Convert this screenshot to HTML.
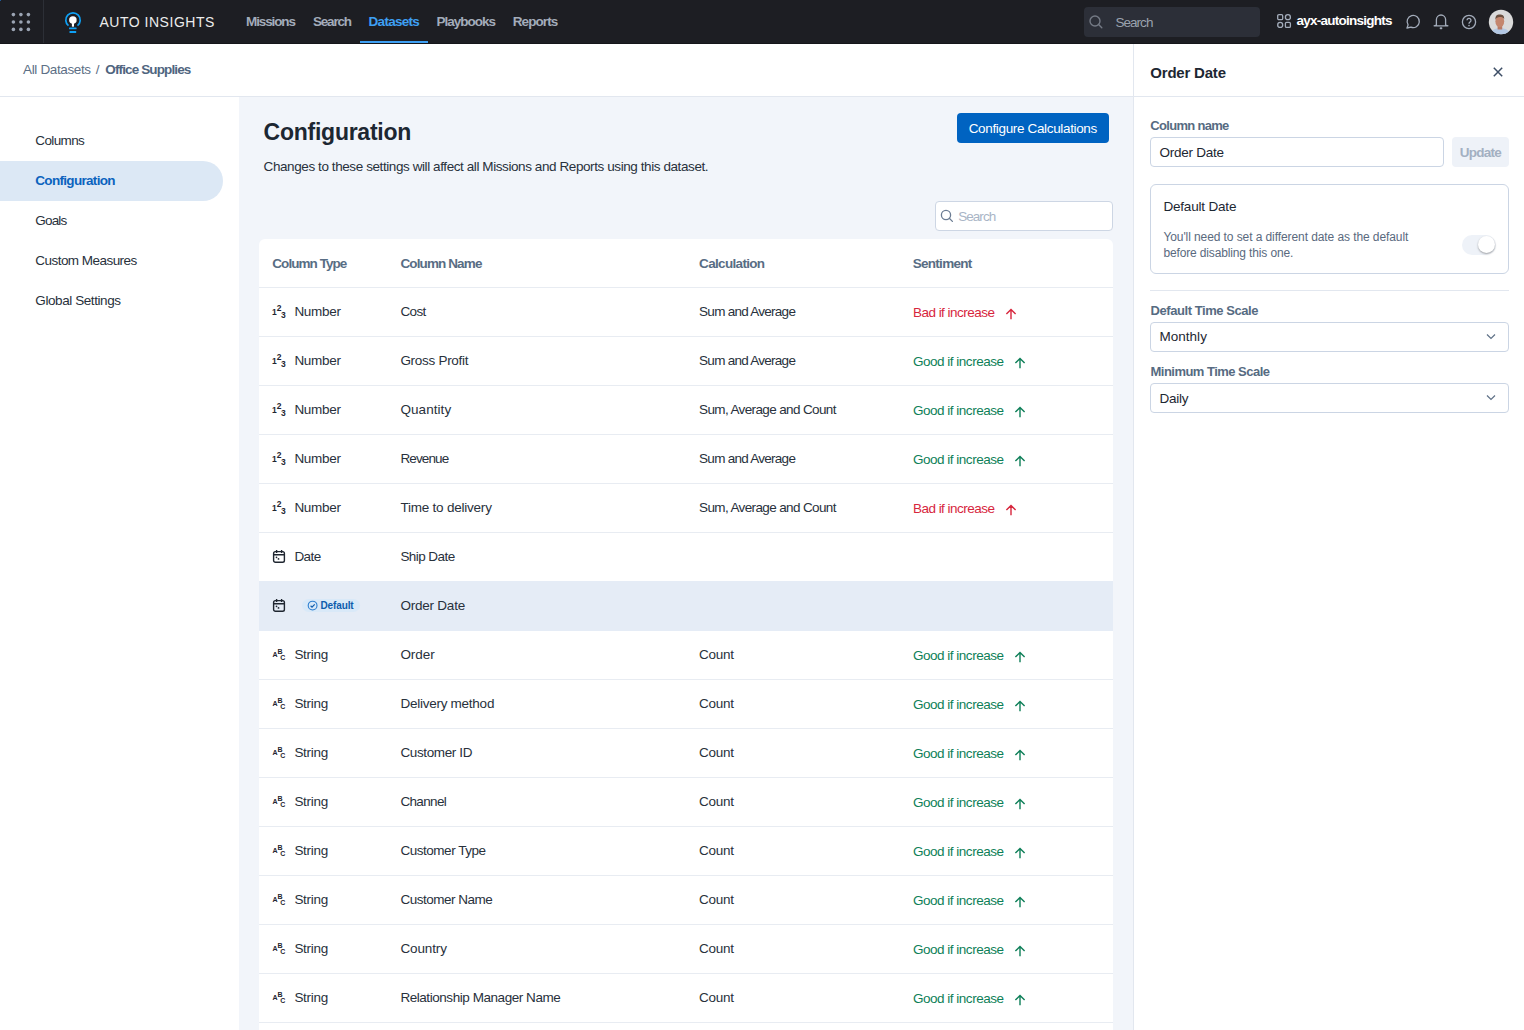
<!DOCTYPE html>
<html><head><meta charset="utf-8"><title>Auto Insights - Configuration</title>
<style>
html,body{margin:0;padding:0;width:1524px;height:1030px;overflow:hidden;background:#fff}
body{position:relative;font-family:"Liberation Sans", sans-serif}
.t{position:absolute;white-space:nowrap;font-family:"Liberation Sans", sans-serif}
svg{overflow:visible}
</style></head><body>
<div style='position:absolute;left:0px;top:0px;width:1524px;height:44px;background:#1d1e23'></div><div style='position:absolute;left:0px;top:0px;width:1px;height:1px;background:#1f5a9a'></div><div style='position:absolute;left:0px;top:43px;width:1524px;height:1px;background:#15161a'></div><div style='position:absolute;left:43px;top:0px;width:1px;height:43px;background:#2c2f36'></div><div style='position:absolute;left:360px;top:41px;width:68px;height:2px;background:#3ea0f4'></div><div style='position:absolute;left:1084px;top:7px;width:176px;height:30px;background:#2c2f38;border-radius:4px'></div><div style='position:absolute;left:0px;top:44px;width:1524px;height:52px;background:#ffffff'></div><div style='position:absolute;left:0px;top:96px;width:1524px;height:1px;background:#e2e7ef'></div><div style='position:absolute;left:0px;top:97px;width:239px;height:933px;background:#ffffff'></div><div style='position:absolute;left:239px;top:97px;width:894px;height:933px;background:#f2f5fa'></div><div style='position:absolute;left:1133px;top:44px;width:391px;height:986px;background:#ffffff'></div><div style='position:absolute;left:1133px;top:44px;width:1px;height:986px;background:#e2e7ef'></div><div style='position:absolute;left:1133px;top:96px;width:391px;height:1px;background:#e2e7ef'></div><div style='position:absolute;left:0px;top:161px;width:223px;height:40px;background:#dce8f5;border-radius:0 20px 20px 0'></div><div style='position:absolute;left:957px;top:113px;width:152px;height:30px;background:#0063c1;border-radius:4px'></div><div style='position:absolute;left:935px;top:201px;width:178px;height:30px;background:#ffffff;border:1px solid #cdd6e4;border-radius:4px;box-sizing:border-box'></div><div style='position:absolute;left:259px;top:239px;width:854px;height:800px;background:#ffffff;border-radius:6px 6px 0 0'></div><div style='position:absolute;left:259px;top:287px;width:854px;height:1px;background:#e8ecf2'></div><div style='position:absolute;left:259px;top:336px;width:854px;height:1px;background:#e8ecf2'></div><div style='position:absolute;left:259px;top:385px;width:854px;height:1px;background:#e8ecf2'></div><div style='position:absolute;left:259px;top:434px;width:854px;height:1px;background:#e8ecf2'></div><div style='position:absolute;left:259px;top:483px;width:854px;height:1px;background:#e8ecf2'></div><div style='position:absolute;left:259px;top:532px;width:854px;height:1px;background:#e8ecf2'></div><div style='position:absolute;left:259px;top:581px;width:854px;height:1px;background:#e8ecf2'></div><div style='position:absolute;left:259px;top:630px;width:854px;height:1px;background:#e8ecf2'></div><div style='position:absolute;left:259px;top:679px;width:854px;height:1px;background:#e8ecf2'></div><div style='position:absolute;left:259px;top:728px;width:854px;height:1px;background:#e8ecf2'></div><div style='position:absolute;left:259px;top:777px;width:854px;height:1px;background:#e8ecf2'></div><div style='position:absolute;left:259px;top:826px;width:854px;height:1px;background:#e8ecf2'></div><div style='position:absolute;left:259px;top:875px;width:854px;height:1px;background:#e8ecf2'></div><div style='position:absolute;left:259px;top:924px;width:854px;height:1px;background:#e8ecf2'></div><div style='position:absolute;left:259px;top:973px;width:854px;height:1px;background:#e8ecf2'></div><div style='position:absolute;left:259px;top:1022px;width:854px;height:1px;background:#e8ecf2'></div><div style='position:absolute;left:259px;top:581px;width:854px;height:50px;background:#e5ecf6'></div><div style='position:absolute;left:302px;top:599px;width:58px;height:13px;background:#d9e9f8;border-radius:7px'></div><div style='position:absolute;left:1150px;top:137px;width:294px;height:30px;background:#fff;border:1px solid #cbd5e4;border-radius:4px;box-sizing:border-box'></div><div style='position:absolute;left:1452px;top:137px;width:57px;height:30px;background:#eef2f8;border-radius:4px'></div><div style='position:absolute;left:1150px;top:184px;width:359px;height:90px;background:#fff;border:1px solid #cbd5e4;border-radius:6px;box-sizing:border-box'></div><div style='position:absolute;left:1462px;top:235px;width:34px;height:20px;background:#eef2f8;border-radius:10px'></div><div style='position:absolute;left:1477.9px;top:236.1px;width:17.4px;height:17.4px;background:#fff;border-radius:50%;box-shadow:0 1px 2px rgba(0,0,0,0.35)'></div><div style='position:absolute;left:1150px;top:290px;width:359px;height:1px;background:#e2e7ef'></div><div style='position:absolute;left:1150px;top:322px;width:359px;height:30px;background:#fff;border:1px solid #cbd5e4;border-radius:4px;box-sizing:border-box'></div><div style='position:absolute;left:1150px;top:383px;width:359px;height:30px;background:#fff;border:1px solid #cbd5e4;border-radius:4px;box-sizing:border-box'></div>
<svg style='position:absolute;left:0px;top:0px' width='43' height='43' viewBox='0 0 43 43'><circle cx='13.4' cy='14.6' r='1.8' fill='#9ba4b3'/><circle cx='13.4' cy='22.0' r='1.8' fill='#9ba4b3'/><circle cx='13.4' cy='29.4' r='1.8' fill='#9ba4b3'/><circle cx='20.9' cy='14.6' r='1.8' fill='#9ba4b3'/><circle cx='20.9' cy='22.0' r='1.8' fill='#9ba4b3'/><circle cx='20.9' cy='29.4' r='1.8' fill='#9ba4b3'/><circle cx='28.4' cy='14.6' r='1.8' fill='#9ba4b3'/><circle cx='28.4' cy='22.0' r='1.8' fill='#9ba4b3'/><circle cx='28.4' cy='29.4' r='1.8' fill='#9ba4b3'/></svg><svg style='position:absolute;left:60px;top:6px' width='26' height='30' viewBox='0 0 26 30'><g transform='translate(0,0.5)'><path d='M8.48 19.2 A7.2 7.2 0 1 1 17.52 19.2' fill='none' stroke='#0ea0f4' stroke-width='1.7'/><circle cx='12.9' cy='13.6' r='3.75' fill='#fff'/><rect x='11.9' y='15' width='2.1' height='5.2' fill='#fff'/></g><rect x='9' y='21.5' width='7.6' height='1.8' rx='0.5' fill='#0ea0f4'/><rect x='9.5' y='25.1' width='6.7' height='1.9' rx='0.5' fill='#0ea0f4'/></svg><svg style='position:absolute;left:1088px;top:14px' width='16' height='16' viewBox='0 0 16 16'><circle cx='7' cy='7' r='5' fill='none' stroke='#747a85' stroke-width='1.4'/><path d='M10.6 10.6 L13.8 13.8' stroke='#747a85' stroke-width='1.4' stroke-linecap='round'/></svg><svg style='position:absolute;left:1276px;top:13px' width='16' height='16' viewBox='0 0 16 16'><rect x='1.7' y='1.7' width='5' height='5' rx='1.2' fill='none' stroke='#a3acba' stroke-width='1.3'/><circle cx='11.9' cy='4.2' r='2.5' fill='none' stroke='#a3acba' stroke-width='1.3'/><circle cx='4.2' cy='11.9' r='2.5' fill='none' stroke='#a3acba' stroke-width='1.3'/><rect x='9.4' y='9.4' width='5' height='5' rx='1.2' fill='none' stroke='#a3acba' stroke-width='1.3'/></svg><svg style='position:absolute;left:1404.2px;top:14px' width='16' height='16' viewBox='0 0 16 16'><path d='M3 14 L4.1 10.9 A6.1 6.1 0 1 1 6.9 13.2 Z' fill='none' stroke='#a3acba' stroke-width='1.3' stroke-linejoin='round'/></svg><svg style='position:absolute;left:1433px;top:14px' width='16' height='16' viewBox='0 0 16 16'><path d='M3.4 11.2 V5.6 A4.6 4.6 0 0 1 12.6 5.6 V11.2 L14.9 11.8 H1.1 Z' fill='none' stroke='#a3acba' stroke-width='1.3' stroke-linejoin='round'/><rect x='6.7' y='13.3' width='2.6' height='1.9' rx='0.8' fill='#a3acba'/></svg><svg style='position:absolute;left:1461px;top:14px' width='16' height='16' viewBox='0 0 16 16'><circle cx='8' cy='8' r='6.6' fill='none' stroke='#a3acba' stroke-width='1.3'/><path d='M6 6.3 A2 2 0 1 1 8.9 8.1 C8.2 8.5 8 8.9 8 9.7' fill='none' stroke='#a3acba' stroke-width='1.3'/><circle cx='8' cy='11.6' r='0.8' fill='#a3acba'/></svg><svg style='position:absolute;left:1488px;top:9px' width='26' height='26' viewBox='0 0 26 26'><defs><clipPath id='av'><circle cx='13' cy='13' r='12.2'/></clipPath></defs><circle cx='13' cy='13' r='12.2' fill='#dadada'/><g clip-path='url(#av)'><path d='M2 27 C3 21 7 19.3 12 19.1 C17 19.3 21.5 21 23 27 Z' fill='#b3c8e4'/><rect x='9.6' y='15' width='4.6' height='5.5' fill='#b97a64'/><ellipse cx='11.8' cy='12.3' rx='4.4' ry='5.9' fill='#c4866e'/><path d='M7.4 10.8 C7.2 6.6 9 5.5 11.8 5.5 C14.6 5.5 16.4 6.5 16.2 10.2 C15.5 8.3 14 7.9 11.8 7.9 C9.6 7.9 8.2 8.8 7.4 10.8 Z' fill='#6b5040'/></g></svg><svg style='position:absolute;left:940px;top:209px' width='14' height='14' viewBox='0 0 14 14'><circle cx='6' cy='6' r='4.6' fill='none' stroke='#6b7c93' stroke-width='1.3'/><path d='M9.3 9.3 L12.4 12.4' stroke='#6b7c93' stroke-width='1.3' stroke-linecap='round'/></svg><svg style='position:absolute;left:1492px;top:66px' width='12' height='12' viewBox='0 0 12 12'><path d='M1.8 1.8 L10.2 10.2 M10.2 1.8 L1.8 10.2' stroke='#3d4e66' stroke-width='1.5'/></svg><svg style='position:absolute;left:1485px;top:333px' width='12' height='8' viewBox='0 0 12 8'><path d='M2 1.5 L6 5.5 L10 1.5' fill='none' stroke='#5f7187' stroke-width='1.2'/></svg><svg style='position:absolute;left:1485px;top:394px' width='12' height='8' viewBox='0 0 12 8'><path d='M2 1.5 L6 5.5 L10 1.5' fill='none' stroke='#5f7187' stroke-width='1.2'/></svg><svg style='position:absolute;left:271px;top:304px' width='17' height='16' viewBox='0 0 17 16'><text x='1' y='11' font-family='Liberation Sans' font-weight='700' font-size='8.5' fill='#1f2630'>1</text><text x='5.8' y='7.2' font-family='Liberation Sans' font-weight='700' font-size='8.5' fill='#1f2630'>2</text><text x='10' y='14.4' font-family='Liberation Sans' font-weight='700' font-size='8.5' fill='#1f2630'>3</text></svg><svg style='position:absolute;left:271px;top:353px' width='17' height='16' viewBox='0 0 17 16'><text x='1' y='11' font-family='Liberation Sans' font-weight='700' font-size='8.5' fill='#1f2630'>1</text><text x='5.8' y='7.2' font-family='Liberation Sans' font-weight='700' font-size='8.5' fill='#1f2630'>2</text><text x='10' y='14.4' font-family='Liberation Sans' font-weight='700' font-size='8.5' fill='#1f2630'>3</text></svg><svg style='position:absolute;left:271px;top:402px' width='17' height='16' viewBox='0 0 17 16'><text x='1' y='11' font-family='Liberation Sans' font-weight='700' font-size='8.5' fill='#1f2630'>1</text><text x='5.8' y='7.2' font-family='Liberation Sans' font-weight='700' font-size='8.5' fill='#1f2630'>2</text><text x='10' y='14.4' font-family='Liberation Sans' font-weight='700' font-size='8.5' fill='#1f2630'>3</text></svg><svg style='position:absolute;left:271px;top:451px' width='17' height='16' viewBox='0 0 17 16'><text x='1' y='11' font-family='Liberation Sans' font-weight='700' font-size='8.5' fill='#1f2630'>1</text><text x='5.8' y='7.2' font-family='Liberation Sans' font-weight='700' font-size='8.5' fill='#1f2630'>2</text><text x='10' y='14.4' font-family='Liberation Sans' font-weight='700' font-size='8.5' fill='#1f2630'>3</text></svg><svg style='position:absolute;left:271px;top:500px' width='17' height='16' viewBox='0 0 17 16'><text x='1' y='11' font-family='Liberation Sans' font-weight='700' font-size='8.5' fill='#1f2630'>1</text><text x='5.8' y='7.2' font-family='Liberation Sans' font-weight='700' font-size='8.5' fill='#1f2630'>2</text><text x='10' y='14.4' font-family='Liberation Sans' font-weight='700' font-size='8.5' fill='#1f2630'>3</text></svg><svg style='position:absolute;left:272px;top:549.3px' width='14' height='15' viewBox='0 0 14 15'><rect x='1.6' y='2.6' width='10.8' height='10.6' rx='1.8' fill='none' stroke='#1f2630' stroke-width='1.4'/><path d='M1.6 5.8 H12.4 M4.6 1 V4 M9.6 1 V4' stroke='#1f2630' stroke-width='1.4'/><circle cx='4.5' cy='8.3' r='0.85' fill='#1f2630'/><circle cx='6.5' cy='9.9' r='0.9' fill='#1f2630'/></svg><svg style='position:absolute;left:272px;top:598.3px' width='14' height='15' viewBox='0 0 14 15'><rect x='1.6' y='2.6' width='10.8' height='10.6' rx='1.8' fill='none' stroke='#1f2630' stroke-width='1.4'/><path d='M1.6 5.8 H12.4 M4.6 1 V4 M9.6 1 V4' stroke='#1f2630' stroke-width='1.4'/><circle cx='4.5' cy='8.3' r='0.85' fill='#1f2630'/><circle cx='6.5' cy='9.9' r='0.9' fill='#1f2630'/></svg><svg style='position:absolute;left:271px;top:647px' width='17' height='16' viewBox='0 0 17 16'><text x='1.4' y='10.2' font-family='Liberation Sans' font-weight='700' font-size='7' fill='#1f2630'>A</text><text x='6.4' y='7.1' font-family='Liberation Sans' font-weight='700' font-size='7' fill='#1f2630'>B</text><text x='9.2' y='13.2' font-family='Liberation Sans' font-weight='700' font-size='7' fill='#1f2630'>C</text></svg><svg style='position:absolute;left:271px;top:696px' width='17' height='16' viewBox='0 0 17 16'><text x='1.4' y='10.2' font-family='Liberation Sans' font-weight='700' font-size='7' fill='#1f2630'>A</text><text x='6.4' y='7.1' font-family='Liberation Sans' font-weight='700' font-size='7' fill='#1f2630'>B</text><text x='9.2' y='13.2' font-family='Liberation Sans' font-weight='700' font-size='7' fill='#1f2630'>C</text></svg><svg style='position:absolute;left:271px;top:745px' width='17' height='16' viewBox='0 0 17 16'><text x='1.4' y='10.2' font-family='Liberation Sans' font-weight='700' font-size='7' fill='#1f2630'>A</text><text x='6.4' y='7.1' font-family='Liberation Sans' font-weight='700' font-size='7' fill='#1f2630'>B</text><text x='9.2' y='13.2' font-family='Liberation Sans' font-weight='700' font-size='7' fill='#1f2630'>C</text></svg><svg style='position:absolute;left:271px;top:794px' width='17' height='16' viewBox='0 0 17 16'><text x='1.4' y='10.2' font-family='Liberation Sans' font-weight='700' font-size='7' fill='#1f2630'>A</text><text x='6.4' y='7.1' font-family='Liberation Sans' font-weight='700' font-size='7' fill='#1f2630'>B</text><text x='9.2' y='13.2' font-family='Liberation Sans' font-weight='700' font-size='7' fill='#1f2630'>C</text></svg><svg style='position:absolute;left:271px;top:843px' width='17' height='16' viewBox='0 0 17 16'><text x='1.4' y='10.2' font-family='Liberation Sans' font-weight='700' font-size='7' fill='#1f2630'>A</text><text x='6.4' y='7.1' font-family='Liberation Sans' font-weight='700' font-size='7' fill='#1f2630'>B</text><text x='9.2' y='13.2' font-family='Liberation Sans' font-weight='700' font-size='7' fill='#1f2630'>C</text></svg><svg style='position:absolute;left:271px;top:892px' width='17' height='16' viewBox='0 0 17 16'><text x='1.4' y='10.2' font-family='Liberation Sans' font-weight='700' font-size='7' fill='#1f2630'>A</text><text x='6.4' y='7.1' font-family='Liberation Sans' font-weight='700' font-size='7' fill='#1f2630'>B</text><text x='9.2' y='13.2' font-family='Liberation Sans' font-weight='700' font-size='7' fill='#1f2630'>C</text></svg><svg style='position:absolute;left:271px;top:941px' width='17' height='16' viewBox='0 0 17 16'><text x='1.4' y='10.2' font-family='Liberation Sans' font-weight='700' font-size='7' fill='#1f2630'>A</text><text x='6.4' y='7.1' font-family='Liberation Sans' font-weight='700' font-size='7' fill='#1f2630'>B</text><text x='9.2' y='13.2' font-family='Liberation Sans' font-weight='700' font-size='7' fill='#1f2630'>C</text></svg><svg style='position:absolute;left:271px;top:990px' width='17' height='16' viewBox='0 0 17 16'><text x='1.4' y='10.2' font-family='Liberation Sans' font-weight='700' font-size='7' fill='#1f2630'>A</text><text x='6.4' y='7.1' font-family='Liberation Sans' font-weight='700' font-size='7' fill='#1f2630'>B</text><text x='9.2' y='13.2' font-family='Liberation Sans' font-weight='700' font-size='7' fill='#1f2630'>C</text></svg><svg style='position:absolute;left:307px;top:600px' width='12' height='12' viewBox='0 0 12 12'><circle cx='5.6' cy='5.6' r='4.4' fill='none' stroke='#2d7fd0' stroke-width='1.1'/><path d='M3.6 5.8 L5 7.1 L7.7 4.3' fill='none' stroke='#0d5cad' stroke-width='1.2'/></svg><svg style='position:absolute;left:1005px;top:308px' width='12' height='12' viewBox='0 0 12 12'><path d='M6 11.2 V1.6 M1.4 6.1 L6 1.5 L10.6 6.1' fill='none' stroke='#d7263d' stroke-width='1.4'/></svg><svg style='position:absolute;left:1014px;top:357px' width='12' height='12' viewBox='0 0 12 12'><path d='M6 11.2 V1.6 M1.4 6.1 L6 1.5 L10.6 6.1' fill='none' stroke='#0e7f58' stroke-width='1.4'/></svg><svg style='position:absolute;left:1014px;top:406px' width='12' height='12' viewBox='0 0 12 12'><path d='M6 11.2 V1.6 M1.4 6.1 L6 1.5 L10.6 6.1' fill='none' stroke='#0e7f58' stroke-width='1.4'/></svg><svg style='position:absolute;left:1014px;top:455px' width='12' height='12' viewBox='0 0 12 12'><path d='M6 11.2 V1.6 M1.4 6.1 L6 1.5 L10.6 6.1' fill='none' stroke='#0e7f58' stroke-width='1.4'/></svg><svg style='position:absolute;left:1005px;top:504px' width='12' height='12' viewBox='0 0 12 12'><path d='M6 11.2 V1.6 M1.4 6.1 L6 1.5 L10.6 6.1' fill='none' stroke='#d7263d' stroke-width='1.4'/></svg><svg style='position:absolute;left:1014px;top:651px' width='12' height='12' viewBox='0 0 12 12'><path d='M6 11.2 V1.6 M1.4 6.1 L6 1.5 L10.6 6.1' fill='none' stroke='#0e7f58' stroke-width='1.4'/></svg><svg style='position:absolute;left:1014px;top:700px' width='12' height='12' viewBox='0 0 12 12'><path d='M6 11.2 V1.6 M1.4 6.1 L6 1.5 L10.6 6.1' fill='none' stroke='#0e7f58' stroke-width='1.4'/></svg><svg style='position:absolute;left:1014px;top:749px' width='12' height='12' viewBox='0 0 12 12'><path d='M6 11.2 V1.6 M1.4 6.1 L6 1.5 L10.6 6.1' fill='none' stroke='#0e7f58' stroke-width='1.4'/></svg><svg style='position:absolute;left:1014px;top:798px' width='12' height='12' viewBox='0 0 12 12'><path d='M6 11.2 V1.6 M1.4 6.1 L6 1.5 L10.6 6.1' fill='none' stroke='#0e7f58' stroke-width='1.4'/></svg><svg style='position:absolute;left:1014px;top:847px' width='12' height='12' viewBox='0 0 12 12'><path d='M6 11.2 V1.6 M1.4 6.1 L6 1.5 L10.6 6.1' fill='none' stroke='#0e7f58' stroke-width='1.4'/></svg><svg style='position:absolute;left:1014px;top:896px' width='12' height='12' viewBox='0 0 12 12'><path d='M6 11.2 V1.6 M1.4 6.1 L6 1.5 L10.6 6.1' fill='none' stroke='#0e7f58' stroke-width='1.4'/></svg><svg style='position:absolute;left:1014px;top:945px' width='12' height='12' viewBox='0 0 12 12'><path d='M6 11.2 V1.6 M1.4 6.1 L6 1.5 L10.6 6.1' fill='none' stroke='#0e7f58' stroke-width='1.4'/></svg><svg style='position:absolute;left:1014px;top:994px' width='12' height='12' viewBox='0 0 12 12'><path d='M6 11.2 V1.6 M1.4 6.1 L6 1.5 L10.6 6.1' fill='none' stroke='#0e7f58' stroke-width='1.4'/></svg>
<span class='t' style='left:99.4px;top:15.15px;font-size:14px;line-height:14px;font-weight:400;color:#ececec;letter-spacing:0.529px;'>AUTO INSIGHTS</span><span class='t' style='left:246.0px;top:14.57px;font-size:13.5px;line-height:13.5px;font-weight:700;color:#a3acba;letter-spacing:-1.109px;'>Missions</span><span class='t' style='left:313.0px;top:14.57px;font-size:13.5px;line-height:13.5px;font-weight:700;color:#a3acba;letter-spacing:-1.206px;'>Search</span><span class='t' style='left:368.6px;top:14.57px;font-size:13.5px;line-height:13.5px;font-weight:700;color:#3ea0f4;letter-spacing:-0.726px;'>Datasets</span><span class='t' style='left:436.5px;top:14.57px;font-size:13.5px;line-height:13.5px;font-weight:700;color:#a3acba;letter-spacing:-1.004px;'>Playbooks</span><span class='t' style='left:512.7px;top:14.57px;font-size:13.5px;line-height:13.5px;font-weight:700;color:#a3acba;letter-spacing:-0.903px;'>Reports</span><span class='t' style='left:1115.4px;top:15.57px;font-size:13.5px;line-height:13.5px;font-weight:400;color:#9aa2ae;letter-spacing:-0.956px;'>Search</span><span class='t' style='left:1296.6px;top:14.37px;font-size:13.5px;line-height:13.5px;font-weight:700;color:#ffffff;letter-spacing:-0.752px;'>ayx-autoinsights</span><span class='t' style='left:23.1px;top:62.57px;font-size:13.5px;line-height:13.5px;font-weight:400;color:#5d6f86;letter-spacing:-0.366px;'>All Datasets</span><span class='t' style='left:95.7px;top:62.57px;font-size:13.5px;line-height:13.5px;font-weight:400;color:#5d6f86;letter-spacing:0.000px;'>/</span><span class='t' style='left:105.3px;top:62.57px;font-size:13.5px;line-height:13.5px;font-weight:700;color:#4f6580;letter-spacing:-0.877px;'>Office Supplies</span><span class='t' style='left:35.3px;top:133.57px;font-size:13.5px;line-height:13.5px;font-weight:400;color:#28313c;letter-spacing:-0.630px;'>Columns</span><span class='t' style='left:35.3px;top:173.57px;font-size:13.5px;line-height:13.5px;font-weight:700;color:#0b63be;letter-spacing:-0.690px;'>Configuration</span><span class='t' style='left:35.3px;top:213.57px;font-size:13.5px;line-height:13.5px;font-weight:400;color:#28313c;letter-spacing:-0.820px;'>Goals</span><span class='t' style='left:35.3px;top:253.57px;font-size:13.5px;line-height:13.5px;font-weight:400;color:#28313c;letter-spacing:-0.539px;'>Custom Measures</span><span class='t' style='left:35.3px;top:293.57px;font-size:13.5px;line-height:13.5px;font-weight:400;color:#28313c;letter-spacing:-0.419px;'>Global Settings</span><span class='t' style='left:263.6px;top:120.53px;font-size:23px;line-height:23px;font-weight:700;color:#1d2732;letter-spacing:-0.254px;'>Configuration</span><span class='t' style='left:263.6px;top:159.57px;font-size:13.5px;line-height:13.5px;font-weight:400;color:#28313c;letter-spacing:-0.414px;'>Changes to these settings will affect all Missions and Reports using this dataset.</span><span class='t' style='left:968.7px;top:121.77px;font-size:13.5px;line-height:13.5px;font-weight:400;color:#ffffff;letter-spacing:-0.344px;'>Configure Calculations</span><span class='t' style='left:958.2px;top:209.57px;font-size:13.5px;line-height:13.5px;font-weight:400;color:#a9b5c6;letter-spacing:-0.956px;'>Search</span><span class='t' style='left:272.3px;top:256.57px;font-size:13.5px;line-height:13.5px;font-weight:700;color:#586d84;letter-spacing:-0.952px;'>Column Type</span><span class='t' style='left:400.4px;top:256.57px;font-size:13.5px;line-height:13.5px;font-weight:700;color:#586d84;letter-spacing:-0.877px;'>Column Name</span><span class='t' style='left:699.1px;top:256.57px;font-size:13.5px;line-height:13.5px;font-weight:700;color:#586d84;letter-spacing:-0.677px;'>Calculation</span><span class='t' style='left:912.7px;top:256.57px;font-size:13.5px;line-height:13.5px;font-weight:700;color:#586d84;letter-spacing:-0.708px;'>Sentiment</span><span class='t' style='left:294.4px;top:304.57px;font-size:13.5px;line-height:13.5px;font-weight:400;color:#28313c;letter-spacing:-0.283px;'>Number</span><span class='t' style='left:400.4px;top:304.57px;font-size:13.5px;line-height:13.5px;font-weight:400;color:#28313c;letter-spacing:-0.622px;'>Cost</span><span class='t' style='left:699.1px;top:304.57px;font-size:13.5px;line-height:13.5px;font-weight:400;color:#28313c;letter-spacing:-0.734px;'>Sum and Average</span><span class='t' style='left:912.9px;top:305.57px;font-size:13.5px;line-height:13.5px;font-weight:400;color:#d7263d;letter-spacing:-0.508px;'>Bad if increase</span><span class='t' style='left:294.4px;top:353.57px;font-size:13.5px;line-height:13.5px;font-weight:400;color:#28313c;letter-spacing:-0.283px;'>Number</span><span class='t' style='left:400.4px;top:353.57px;font-size:13.5px;line-height:13.5px;font-weight:400;color:#28313c;letter-spacing:-0.288px;'>Gross Profit</span><span class='t' style='left:699.1px;top:353.57px;font-size:13.5px;line-height:13.5px;font-weight:400;color:#28313c;letter-spacing:-0.734px;'>Sum and Average</span><span class='t' style='left:912.9px;top:354.57px;font-size:13.5px;line-height:13.5px;font-weight:400;color:#0e7f58;letter-spacing:-0.481px;'>Good if increase</span><span class='t' style='left:294.4px;top:402.57px;font-size:13.5px;line-height:13.5px;font-weight:400;color:#28313c;letter-spacing:-0.283px;'>Number</span><span class='t' style='left:400.4px;top:402.57px;font-size:13.5px;line-height:13.5px;font-weight:400;color:#28313c;letter-spacing:0.074px;'>Quantity</span><span class='t' style='left:699.1px;top:402.57px;font-size:13.5px;line-height:13.5px;font-weight:400;color:#28313c;letter-spacing:-0.634px;'>Sum, Average and Count</span><span class='t' style='left:912.9px;top:403.57px;font-size:13.5px;line-height:13.5px;font-weight:400;color:#0e7f58;letter-spacing:-0.481px;'>Good if increase</span><span class='t' style='left:294.4px;top:451.57px;font-size:13.5px;line-height:13.5px;font-weight:400;color:#28313c;letter-spacing:-0.283px;'>Number</span><span class='t' style='left:400.4px;top:451.57px;font-size:13.5px;line-height:13.5px;font-weight:400;color:#28313c;letter-spacing:-0.874px;'>Revenue</span><span class='t' style='left:699.1px;top:451.57px;font-size:13.5px;line-height:13.5px;font-weight:400;color:#28313c;letter-spacing:-0.734px;'>Sum and Average</span><span class='t' style='left:912.9px;top:452.57px;font-size:13.5px;line-height:13.5px;font-weight:400;color:#0e7f58;letter-spacing:-0.481px;'>Good if increase</span><span class='t' style='left:294.4px;top:500.57px;font-size:13.5px;line-height:13.5px;font-weight:400;color:#28313c;letter-spacing:-0.283px;'>Number</span><span class='t' style='left:400.4px;top:500.57px;font-size:13.5px;line-height:13.5px;font-weight:400;color:#28313c;letter-spacing:-0.219px;'>Time to delivery</span><span class='t' style='left:699.1px;top:500.57px;font-size:13.5px;line-height:13.5px;font-weight:400;color:#28313c;letter-spacing:-0.634px;'>Sum, Average and Count</span><span class='t' style='left:912.9px;top:501.57px;font-size:13.5px;line-height:13.5px;font-weight:400;color:#d7263d;letter-spacing:-0.508px;'>Bad if increase</span><span class='t' style='left:294.4px;top:549.57px;font-size:13.5px;line-height:13.5px;font-weight:400;color:#28313c;letter-spacing:-0.544px;'>Date</span><span class='t' style='left:400.4px;top:549.57px;font-size:13.5px;line-height:13.5px;font-weight:400;color:#28313c;letter-spacing:-0.562px;'>Ship Date</span><span class='t' style='left:400.4px;top:598.57px;font-size:13.5px;line-height:13.5px;font-weight:400;color:#28313c;letter-spacing:-0.220px;'>Order Date</span><span class='t' style='left:294.4px;top:647.57px;font-size:13.5px;line-height:13.5px;font-weight:400;color:#28313c;letter-spacing:-0.296px;'>String</span><span class='t' style='left:400.4px;top:647.57px;font-size:13.5px;line-height:13.5px;font-weight:400;color:#28313c;letter-spacing:-0.054px;'>Order</span><span class='t' style='left:699.1px;top:647.57px;font-size:13.5px;line-height:13.5px;font-weight:400;color:#28313c;letter-spacing:-0.258px;'>Count</span><span class='t' style='left:912.9px;top:648.57px;font-size:13.5px;line-height:13.5px;font-weight:400;color:#0e7f58;letter-spacing:-0.481px;'>Good if increase</span><span class='t' style='left:294.4px;top:696.57px;font-size:13.5px;line-height:13.5px;font-weight:400;color:#28313c;letter-spacing:-0.296px;'>String</span><span class='t' style='left:400.4px;top:696.57px;font-size:13.5px;line-height:13.5px;font-weight:400;color:#28313c;letter-spacing:-0.253px;'>Delivery method</span><span class='t' style='left:699.1px;top:696.57px;font-size:13.5px;line-height:13.5px;font-weight:400;color:#28313c;letter-spacing:-0.258px;'>Count</span><span class='t' style='left:912.9px;top:697.57px;font-size:13.5px;line-height:13.5px;font-weight:400;color:#0e7f58;letter-spacing:-0.481px;'>Good if increase</span><span class='t' style='left:294.4px;top:745.57px;font-size:13.5px;line-height:13.5px;font-weight:400;color:#28313c;letter-spacing:-0.296px;'>String</span><span class='t' style='left:400.4px;top:745.57px;font-size:13.5px;line-height:13.5px;font-weight:400;color:#28313c;letter-spacing:-0.368px;'>Customer ID</span><span class='t' style='left:699.1px;top:745.57px;font-size:13.5px;line-height:13.5px;font-weight:400;color:#28313c;letter-spacing:-0.258px;'>Count</span><span class='t' style='left:912.9px;top:746.57px;font-size:13.5px;line-height:13.5px;font-weight:400;color:#0e7f58;letter-spacing:-0.481px;'>Good if increase</span><span class='t' style='left:294.4px;top:794.57px;font-size:13.5px;line-height:13.5px;font-weight:400;color:#28313c;letter-spacing:-0.296px;'>String</span><span class='t' style='left:400.4px;top:794.57px;font-size:13.5px;line-height:13.5px;font-weight:400;color:#28313c;letter-spacing:-0.649px;'>Channel</span><span class='t' style='left:699.1px;top:794.57px;font-size:13.5px;line-height:13.5px;font-weight:400;color:#28313c;letter-spacing:-0.258px;'>Count</span><span class='t' style='left:912.9px;top:795.57px;font-size:13.5px;line-height:13.5px;font-weight:400;color:#0e7f58;letter-spacing:-0.481px;'>Good if increase</span><span class='t' style='left:294.4px;top:843.57px;font-size:13.5px;line-height:13.5px;font-weight:400;color:#28313c;letter-spacing:-0.296px;'>String</span><span class='t' style='left:400.4px;top:843.57px;font-size:13.5px;line-height:13.5px;font-weight:400;color:#28313c;letter-spacing:-0.466px;'>Customer Type</span><span class='t' style='left:699.1px;top:843.57px;font-size:13.5px;line-height:13.5px;font-weight:400;color:#28313c;letter-spacing:-0.258px;'>Count</span><span class='t' style='left:912.9px;top:844.57px;font-size:13.5px;line-height:13.5px;font-weight:400;color:#0e7f58;letter-spacing:-0.481px;'>Good if increase</span><span class='t' style='left:294.4px;top:892.57px;font-size:13.5px;line-height:13.5px;font-weight:400;color:#28313c;letter-spacing:-0.296px;'>String</span><span class='t' style='left:400.4px;top:892.57px;font-size:13.5px;line-height:13.5px;font-weight:400;color:#28313c;letter-spacing:-0.498px;'>Customer Name</span><span class='t' style='left:699.1px;top:892.57px;font-size:13.5px;line-height:13.5px;font-weight:400;color:#28313c;letter-spacing:-0.258px;'>Count</span><span class='t' style='left:912.9px;top:893.57px;font-size:13.5px;line-height:13.5px;font-weight:400;color:#0e7f58;letter-spacing:-0.481px;'>Good if increase</span><span class='t' style='left:294.4px;top:941.57px;font-size:13.5px;line-height:13.5px;font-weight:400;color:#28313c;letter-spacing:-0.296px;'>String</span><span class='t' style='left:400.4px;top:941.57px;font-size:13.5px;line-height:13.5px;font-weight:400;color:#28313c;letter-spacing:-0.114px;'>Country</span><span class='t' style='left:699.1px;top:941.57px;font-size:13.5px;line-height:13.5px;font-weight:400;color:#28313c;letter-spacing:-0.258px;'>Count</span><span class='t' style='left:912.9px;top:942.57px;font-size:13.5px;line-height:13.5px;font-weight:400;color:#0e7f58;letter-spacing:-0.481px;'>Good if increase</span><span class='t' style='left:294.4px;top:990.57px;font-size:13.5px;line-height:13.5px;font-weight:400;color:#28313c;letter-spacing:-0.296px;'>String</span><span class='t' style='left:400.4px;top:990.57px;font-size:13.5px;line-height:13.5px;font-weight:400;color:#28313c;letter-spacing:-0.446px;'>Relationship Manager Name</span><span class='t' style='left:699.1px;top:990.57px;font-size:13.5px;line-height:13.5px;font-weight:400;color:#28313c;letter-spacing:-0.258px;'>Count</span><span class='t' style='left:912.9px;top:991.57px;font-size:13.5px;line-height:13.5px;font-weight:400;color:#0e7f58;letter-spacing:-0.481px;'>Good if increase</span><span class='t' style='left:1150.3px;top:65.30px;font-size:15px;line-height:15px;font-weight:700;color:#1d2732;letter-spacing:-0.203px;'>Order Date</span><span class='t' style='left:1150.3px;top:119.00px;font-size:13px;line-height:13px;font-weight:700;color:#566b82;letter-spacing:-0.697px;'>Column name</span><span class='t' style='left:1159.6px;top:145.57px;font-size:13.5px;line-height:13.5px;font-weight:400;color:#1d2732;letter-spacing:-0.265px;'>Order Date</span><span class='t' style='left:1459.7px;top:145.57px;font-size:13.5px;line-height:13.5px;font-weight:700;color:#a3b0c2;letter-spacing:-0.753px;'>Update</span><span class='t' style='left:1163.4px;top:199.57px;font-size:13.5px;line-height:13.5px;font-weight:400;color:#1d2732;letter-spacing:-0.186px;'>Default Date</span><span class='t' style='left:1163.4px;top:231.24px;font-size:12px;line-height:12px;font-weight:400;color:#5a6a7e;letter-spacing:-0.085px;'>You'll need to set a different date as the default</span><span class='t' style='left:1163.4px;top:247.24px;font-size:12px;line-height:12px;font-weight:400;color:#5a6a7e;letter-spacing:-0.138px;'>before disabling this one.</span><span class='t' style='left:1150.5px;top:304.00px;font-size:13px;line-height:13px;font-weight:700;color:#566b82;letter-spacing:-0.434px;'>Default Time Scale</span><span class='t' style='left:1159.4px;top:330.17px;font-size:13.5px;line-height:13.5px;font-weight:400;color:#1d2732;letter-spacing:0.036px;'>Monthly</span><span class='t' style='left:1150.5px;top:365.00px;font-size:13px;line-height:13px;font-weight:700;color:#566b82;letter-spacing:-0.521px;'>Minimum Time Scale</span><span class='t' style='left:1159.4px;top:391.57px;font-size:13.5px;line-height:13.5px;font-weight:400;color:#1d2732;letter-spacing:-0.204px;'>Daily</span><span class='t' style='left:320.4px;top:600.5px;font-size:10px;line-height:10px;font-weight:700;color:#0d5cad;letter-spacing:-0.1px'>Default</span>
</body></html>
